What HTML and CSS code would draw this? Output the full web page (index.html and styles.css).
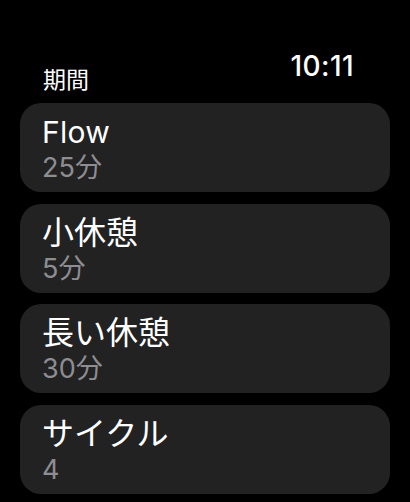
FILE: index.html
```html
<!DOCTYPE html>
<html lang="ja">
<head>
<meta charset="utf-8">
<title>期間</title>
<link rel="stylesheet" href="styles.css">
</head>
<body>
<div class="screen">
  <header class="status">
    <span class="page-title">期間</span>
    <span class="time">10:11</span>
  </header>
  <ul class="list">
    <li class="card">
      <div class="card-title">Flow</div>
      <div class="card-sub">25分</div>
    </li>
    <li class="card">
      <div class="card-title jp">小休憩</div>
      <div class="card-sub">5分</div>
    </li>
    <li class="card">
      <div class="card-title jp">長い休憩</div>
      <div class="card-sub">30分</div>
    </li>
    <li class="card">
      <div class="card-title jp">サイクル</div>
      <div class="card-sub">4</div>
    </li>
  </ul>
</div>
</body>
</html>
```
FILE: styles.css
```css
html, body {
  margin: 0;
  padding: 0;
  background: #000;
}

body {
  font-family: Inter, "Noto Sans CJK JP", sans-serif;
  color: #fff;
  width: 410px;
  height: 502px;
  overflow: hidden;
}

.screen {
  display: flex;
  flex-direction: column;
}

.status {
  display: flex;
  justify-content: space-between;
  height: 103px;
  padding: 0 56px 0 43px;
  box-sizing: border-box;
}

.page-title {
  align-self: flex-end;
  font-size: 23px;
  line-height: 28px;
  margin-bottom: 9px;
}

.time {
  align-self: flex-start;
  margin-top: 50px;
  font-size: 28px;
  line-height: 32px;
  font-weight: 500;
  letter-spacing: 0.4px;
}

.list {
  list-style: none;
  margin: 0;
  padding: 0 20px;
  display: flex;
  flex-direction: column;
  gap: 11.5px;
}

.card {
  height: 89px;
  box-sizing: border-box;
  background: #222223;
  border-radius: 21px;
  padding: 12px 22px 0 22px;
}

.card-title {
  font-size: 30px;
  line-height: 34px;
  font-weight: 400;
  letter-spacing: 0.3px;
}

.card-title.jp {
  font-size: 32px;
  letter-spacing: 0;
}

.card-sub {
  margin-top: 4px;
  font-size: 27px;
  line-height: 30px;
  color: #8d8d92;
}
```
